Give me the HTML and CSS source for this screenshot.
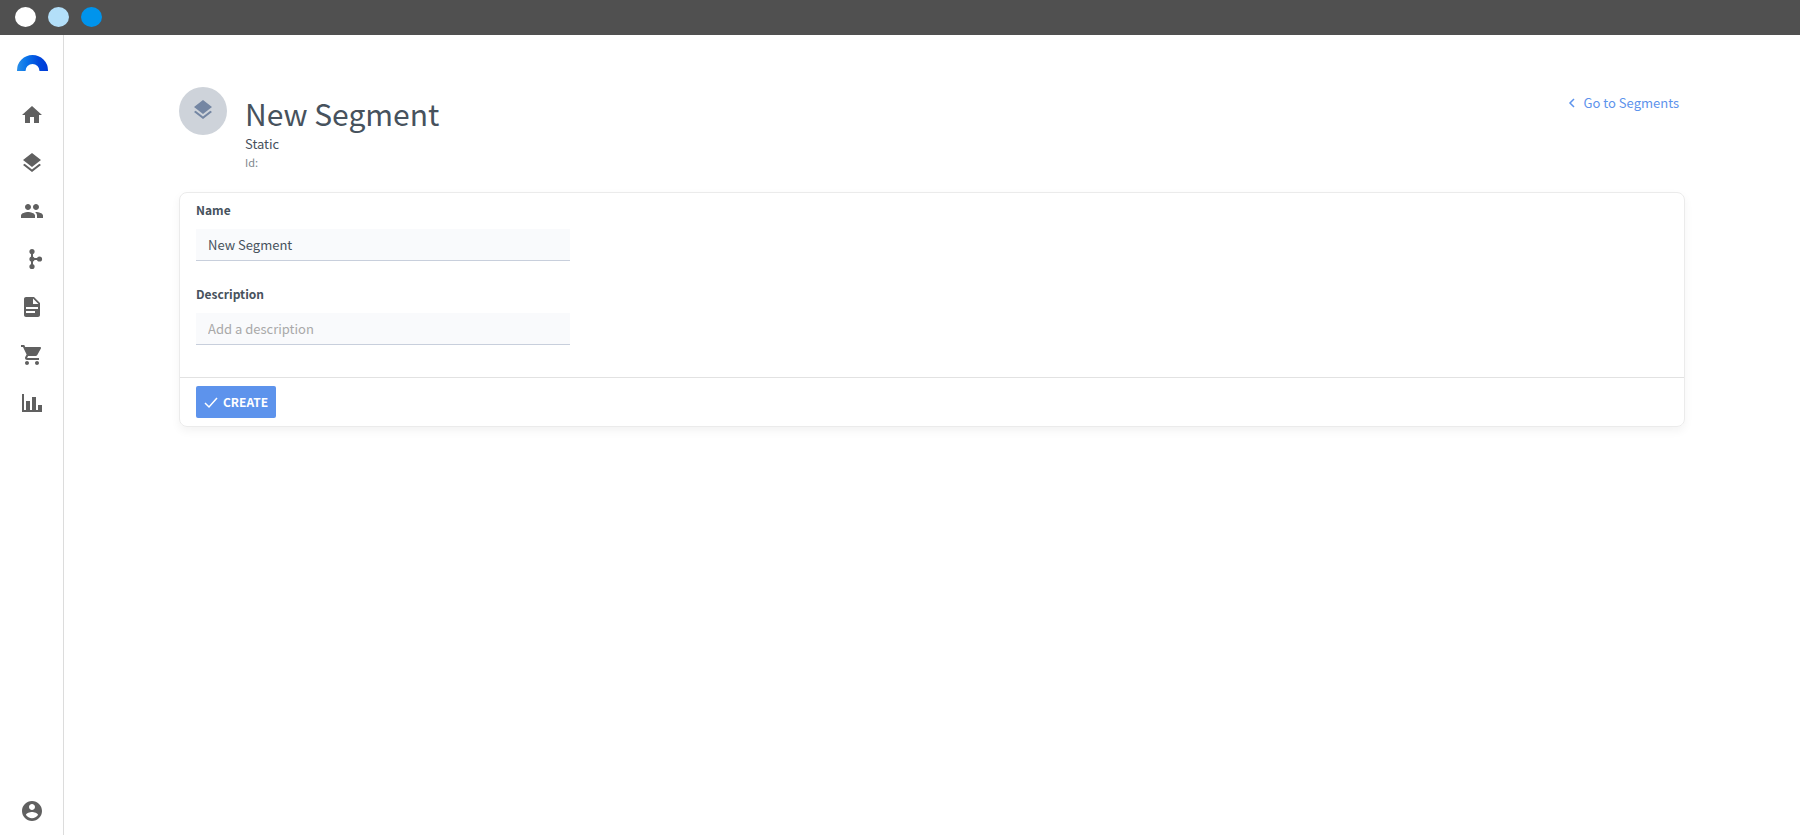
FILE: index.html
```html
<!DOCTYPE html>
<html lang="en">
<head>
  <meta charset="UTF-8">
  <title>New Segment</title>
  <link rel="stylesheet" href="styles.css">
</head>
<body>

  <header class="topbar">
    <span class="dot dot-white"></span>
    <span class="dot dot-light"></span>
    <span class="dot dot-blue"></span>
  </header>

  <div class="layout">
    <nav class="sidebar">
      <a href="#" class="logo" aria-label="Home page">
        <svg width="32" height="16" viewBox="0 0 32 16">
          <defs>
            <linearGradient id="arc" x1="0" y1="0" x2="1" y2="0">
              <stop offset="0" stop-color="#2a8fe8"/>
              <stop offset="0.3" stop-color="#0a75ea"/>
              <stop offset="0.7" stop-color="#0048dc"/>
              <stop offset="1" stop-color="#003ad8"/>
            </linearGradient>
          </defs>
          <path fill="url(#arc)" d="M1 16v-.5a15.500 15.500 0 0 1 31 0v.5h-8.500a7 7 0 0 0-14 0z"/>
        </svg>
      </a>
      <a href="#" class="nav-item" aria-label="Home">
        <svg class="icon" viewBox="0 0 24 24"><path d="M10 20v-6h4v6h5v-8h3L12 3 2 12h3v8z"/></svg>
      </a>
      <a href="#" class="nav-item" aria-label="Segments">
        <svg class="icon" viewBox="0 0 24 24"><path d="M11.990 18.540l-7.370-5.730L3 14.070l9 7 9-7-1.630-1.270-7.380 5.740zM12 16l7.360-5.730L21 9l-9-7-9 7 1.630 1.270L12 16z"/></svg>
      </a>
      <a href="#" class="nav-item" aria-label="Audience">
        <svg class="icon" viewBox="0 0 24 24"><path d="M16 11c1.660 0 2.990-1.340 2.990-3S17.660 5 16 5c-1.660 0-3 1.340-3 3s1.340 3 3 3zm-8 0c1.660 0 2.990-1.340 2.990-3S9.660 5 8 5C6.340 5 5 6.340 5 8s1.340 3 3 3zm0 2c-2.330 0-7 1.170-7 3.500V19h14v-2.500c0-2.330-4.670-3.500-7-3.500zm8 0c-.29 0-.62.020-.97.050 1.160.84 1.970 1.970 1.970 3.450V19h6v-2.500c0-2.330-4.670-3.500-7-3.500z"/></svg>
      </a>
      <a href="#" class="nav-item" aria-label="Workflows">
        <svg class="icon" viewBox="0 0 24 24">
          <path d="M11 4h2v16h-2zM12 11h8v2h-8z"/>
          <circle cx="12" cy="4.500" r="2.600"/>
          <circle cx="12" cy="12" r="2.600"/>
          <circle cx="12" cy="19.500" r="2.600"/>
          <circle cx="19.500" cy="12" r="2.600"/>
        </svg>
      </a>
      <a href="#" class="nav-item" aria-label="Contents">
        <svg class="icon" viewBox="0 0 24 24"><path d="M14 2H6c-1.100 0-1.990.9-1.990 2L4 20c0 1.100.89 2 1.990 2H18c1.100 0 2-.9 2-2V8l-6-6zm1 16H6v-2h9v2zm3-4H6v-2h12v2zm-5-5V3.500L18.500 9H13z"/></svg>
      </a>
      <a href="#" class="nav-item" aria-label="Products">
        <svg class="icon" viewBox="0 0 24 24"><path d="M7 18c-1.100 0-1.990.9-1.990 2S5.900 22 7 22s2-.9 2-2-.9-2-2-2zM1 2v2h2l3.600 7.590-1.350 2.450c-.16.280-.25.610-.25.960 0 1.100.9 2 2 2h12v-2H7.420c-.14 0-.25-.11-.25-.25l.03-.12.900-1.630h7.450c.75 0 1.410-.41 1.750-1.030l3.580-6.490c.08-.14.120-.31.120-.48 0-.55-.45-1-1-1H5.210l-.94-2H1zm16 16c-1.100 0-1.990.9-1.990 2s.89 2 1.990 2 2-.9 2-2-.9-2-2-2z"/></svg>
      </a>
      <a href="#" class="nav-item" aria-label="Reports">
        <svg class="icon" viewBox="0 0 24 24"><path d="M2 3h2v16h18v2H2zM6 10h4v9H6zM12 6h4v13h-4zM18 14h4v5h-4z"/></svg>
      </a>
      <a href="#" class="nav-item account" aria-label="Account">
        <svg class="icon" viewBox="0 0 24 24"><path d="M12 2C6.480 2 2 6.480 2 12s4.480 10 10 10 10-4.480 10-10S17.520 2 12 2zm0 3c1.660 0 3 1.340 3 3s-1.340 3-3 3-3-1.340-3-3 1.340-3 3-3zm0 14.200c-2.500 0-4.710-1.280-6-3.220.03-1.990 4-3.080 6-3.080 1.990 0 5.970 1.090 6 3.080-1.290 1.940-3.500 3.220-6 3.220z"/></svg>
      </a>
    </nav>

    <main class="content">
      <div class="page-header">
        <span class="avatar">
          <svg class="icon" viewBox="0 0 24 24"><path d="M11.990 18.540l-7.370-5.730L3 14.070l9 7 9-7-1.630-1.270-7.380 5.740zM12 16l7.360-5.730L21 9l-9-7-9 7 1.630 1.270L12 16z"/></svg>
        </span>
        <div class="heading">
          <h1>New Segment</h1>
          <div class="type">Static</div>
          <div class="segment-id">Id:</div>
        </div>
        <a href="#" class="back-link">
          <svg width="16" height="16" viewBox="0 0 16 16"><path d="M10 4L6 8l4 4"/></svg>
          Go to Segments
        </a>
      </div>

      <form class="card">
        <div class="card-body">
          <div class="field">
            <label for="name">Name</label>
            <input type="text" id="name" value="New Segment">
          </div>
          <div class="field">
            <label for="description">Description</label>
            <input type="text" id="description" placeholder="Add a description">
          </div>
        </div>
        <div class="card-footer">
          <button type="button" class="btn">
            <svg width="16" height="16" viewBox="0 0 16 16"><path d="M2 9l4 4 8-9"/></svg>
            CREATE
          </button>
        </div>
      </form>
    </main>
  </div>

</body>
</html>
```

FILE: styles.css
```css
* {
  box-sizing: border-box;
}

body {
  display: flex;
  flex-direction: column;
  min-height: 100vh;
  margin: 0;
  font-family: "Source Sans Pro", "Noto Sans CJK SC", sans-serif;
  font-size: 13px;
  line-height: 20px;
  color: #47525d;
  background-color: #fff;
}

a {
  text-decoration: none;
}

.topbar {
  display: flex;
  align-items: center;
  gap: 12px;
  height: 35px;
  padding: 0 15px 1px;
  background-color: #505050;
}

.dot {
  width: 21px;
  height: 20px;
  border-radius: 50%;
}

.dot-white {
  background-color: #fff;
}

.dot-light {
  background-color: #b3dff9;
}

.dot-blue {
  background-color: #0094ec;
}

.layout {
  display: flex;
  flex: 1;
}

.sidebar {
  display: flex;
  flex-direction: column;
  align-items: center;
  width: 64px;
  padding-top: 20px;
  border-right: 1px solid #dcdcdc;
}

.logo {
  display: flex;
  margin-bottom: 20px;
}

.nav-item {
  display: flex;
  align-items: center;
  justify-content: center;
  width: 48px;
  height: 48px;
}

.account {
  margin-top: auto;
}

.icon {
  width: 24px;
  height: 24px;
  fill: #606060;
}

.content {
  flex: 1;
  padding: 52px 115px;
}

.page-header {
  display: flex;
  align-items: flex-start;
  margin-bottom: 21px;
}

.avatar {
  display: flex;
  align-items: center;
  justify-content: center;
  width: 48px;
  height: 48px;
  margin-right: 18px;
  padding-bottom: 2px;
  border-radius: 50%;
  background-color: #ced3da;
}

.avatar .icon {
  fill: #7486a3;
}

.heading h1 {
  margin: 7px 0 2px;
  font-size: 30px;
  font-weight: 400;
  line-height: 38px;
}

.type {
  line-height: 20px;
}

.segment-id {
  font-size: 11px;
  line-height: 17px;
  color: #80878e;
}

.back-link {
  display: flex;
  align-items: center;
  gap: 4px;
  margin: 6px 6px 0 auto;
  color: #5d93ec;
}

.back-link svg,
.btn svg {
  fill: none;
  stroke: currentColor;
  stroke-width: 1.5;
}

.card {
  border: 1px solid #ebebeb;
  border-radius: 8px;
  box-shadow: 0 4px 10px rgba(0, 0, 0, 0.05);
}

.card-body {
  padding: 8px 16px;
}

.field {
  display: flex;
  flex-direction: column;
  gap: 10px;
  max-width: 374px;
  margin-bottom: 24px;
}

.field label {
  font-size: 12px;
  font-weight: 700;
  line-height: 18px;
}

.field input {
  height: 32px;
  padding: 0 12px;
  border: 0;
  border-bottom: 1px solid #c8cfdc;
  background-color: #f9fafc;
  font: inherit;
  color: inherit;
}

.field input::placeholder {
  color: #a9a9a9;
}

.card-footer {
  padding: 8px 16px;
  border-top: 1px solid #e2e2e2;
}

.btn {
  display: flex;
  align-items: center;
  gap: 4px;
  height: 32px;
  padding: 0 8px 0 7px;
  border: 0;
  border-radius: 2px;
  background-color: #5d93ec;
  font: inherit;
  font-size: 12px;
  font-weight: 700;
  color: #fff;
}
```
